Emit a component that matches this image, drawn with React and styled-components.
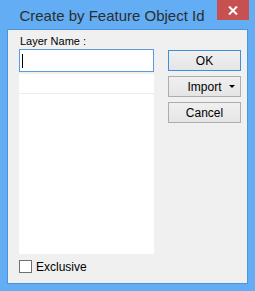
import React from 'react';
import styled, { createGlobalStyle } from 'styled-components';

const GlobalStyle = createGlobalStyle`
  html, body {
    margin: 0;
    padding: 0;
    background: #ffffff;
  }
`;

const Frame = styled.div`
  width: 255px;
  height: 291px;
  box-sizing: border-box;
  background: #62adf4;
  padding: 0 7px 7px 7px;
  display: flex;
  flex-direction: column;
  font-family: 'Liberation Sans', Arial, sans-serif;
`;

const TitleBar = styled.div`
  position: relative;
  height: 29px;
  display: flex;
  align-items: center;
  justify-content: center;
  font-size: 15px;
  color: #2e2e2e;
  padding: 1px 31px 0 0;
  box-sizing: border-box;
`;

const CloseButton = styled.div`
  position: absolute;
  top: 0;
  right: -1px;
  width: 32px;
  height: 20px;
  background: #c75050;
  display: flex;
  align-items: center;
  justify-content: center;
`;

const Client = styled.div`
  flex: 1;
  background: #f0f0f0;
  border: 1px solid #4f94d8;
  display: flex;
  flex-direction: column;
  padding: 0 0 0 11px;
`;

const Body = styled.div`
  display: flex;
  flex: 1;
`;

const LeftColumn = styled.div`
  width: 135px;
  display: flex;
  flex-direction: column;
`;

const Label = styled.div`
  font-size: 11px;
  color: #000;
  height: 19px;
  line-height: 14px;
  padding-top: 4px;
  padding-left: 1px;
  box-sizing: border-box;
`;

const TextInput = styled.div`
  height: 23px;
  box-sizing: border-box;
  background: #fff;
  border: 1px solid #5a9be0;
  display: flex;
  align-items: center;
  padding-left: 2px;
`;

const Caret = styled.div`
  width: 1px;
  height: 14px;
  background: #000;
`;

const ListBox = styled.div`
  margin-top: 2px;
  height: 180px;
  background: #fff;
  display: flex;
  flex-direction: column;
`;

const ListRow = styled.div`
  height: 20px;
  box-sizing: border-box;
  border-bottom: 1px solid #ececec;
`;

const RightColumn = styled.div`
  margin-left: 14px;
  padding-top: 20px;
  display: flex;
  flex-direction: column;
  gap: 5px;
`;

const Button = styled.div`
  width: 73px;
  height: 21px;
  box-sizing: border-box;
  border: 1px solid ${({ $default }) => ($default ? '#3c8fdc' : '#adadad')};
  background: linear-gradient(#f0f0f0, #e5e5e5);
  font-size: 12px;
  color: #000;
  display: flex;
  align-items: center;
  justify-content: center;
  position: relative;
`;

const Arrow = styled.span`
  position: absolute;
  right: 5px;
  top: 8px;
  width: 0;
  height: 0;
  border-left: 3px solid transparent;
  border-right: 3px solid transparent;
  border-top: 3px solid #000;
`;

const CheckRow = styled.div`
  height: 28px;
  display: flex;
  align-items: flex-start;
  padding-top: 5px;
  box-sizing: border-box;
  gap: 4px;
  font-size: 12px;
`;

const CheckBox = styled.div`
  width: 13px;
  height: 13px;
  box-sizing: border-box;
  border: 1px solid #707070;
  background: #fff;
`;

const App = () => (
  <>
    <GlobalStyle />
    <Frame>
      <TitleBar>
        Create by Feature Object Id
        <CloseButton>
          <svg width="10" height="9" viewBox="0 0 10 9">
            <path d="M1 0.5 L9 8.5 M9 0.5 L1 8.5" stroke="#fff" strokeWidth="2" />
          </svg>
        </CloseButton>
      </TitleBar>
      <Client>
        <Body>
          <LeftColumn>
            <Label>Layer Name :</Label>
            <TextInput>
              <Caret />
            </TextInput>
            <ListBox>
              <ListRow />
            </ListBox>
          </LeftColumn>
          <RightColumn>
            <Button $default>OK</Button>
            <Button>
              Import
              <Arrow />
            </Button>
            <Button>Cancel</Button>
          </RightColumn>
        </Body>
        <CheckRow>
          <CheckBox />
          Exclusive
        </CheckRow>
      </Client>
    </Frame>
  </>
);

export default App;
